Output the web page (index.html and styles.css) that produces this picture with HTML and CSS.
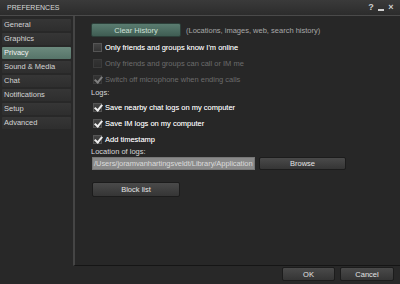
FILE: index.html
```html
<!DOCTYPE html>
<html>
<head>
<meta charset="utf-8">
<link rel="stylesheet" href="styles.css">
</head>
<body>
<div class="window">
  <div class="titlebar">
    <span class="title">PREFERENCES</span>
    <div class="tb-icons">
      <span class="tb-icon">?</span>
      <span class="tb-icon minus"></span>
      <span class="tb-icon">×</span>
    </div>
  </div>
  <div class="main">
    <div class="sidebar">
      <div class="tab">General</div>
      <div class="tab">Graphics</div>
      <div class="tab active">Privacy</div>
      <div class="tab">Sound &amp; Media</div>
      <div class="tab">Chat</div>
      <div class="tab">Notifications</div>
      <div class="tab">Setup</div>
      <div class="tab">Advanced</div>
    </div>
    <div class="panel">
      <div class="row-top">
        <div class="btn teal">Clear History</div>
        <span class="hint">(Locations, images, web, search history)</span>
      </div>
      <div class="check"><span class="box"></span><span class="lbl">Only friends and groups know I'm online</span></div>
      <div class="check disabled"><span class="box"></span><span class="lbl">Only friends and groups can call or IM me</span></div>
      <div class="check disabled"><span class="box checked"></span><span class="lbl">Switch off microphone when ending calls</span></div>
      <div class="section">Logs:</div>
      <div class="check"><span class="box checked"></span><span class="lbl">Save nearby chat logs on my computer</span></div>
      <div class="check"><span class="box checked"></span><span class="lbl">Save IM logs on my computer</span></div>
      <div class="check"><span class="box checked"></span><span class="lbl">Add timestamp</span></div>
      <div class="loc-label">Location of logs:</div>
      <div class="loc-row">
        <div class="field">/Users/joramvanhartingsveldt/Library/Application</div>
        <div class="btn browse">Browse</div>
      </div>
      <div class="btn block">Block list</div>
    </div>
  </div>
  <div class="footer">
    <div class="btn ok">OK</div>
    <div class="btn cancel">Cancel</div>
  </div>
</div>
</body>
</html>
```
FILE: styles.css
```css
* { box-sizing: border-box; }
html, body { margin: 0; padding: 0; }
body {
  width: 400px;
  height: 284px;
  background: #282828;
  font-family: "Liberation Sans", Arial, sans-serif;
  font-size: 7.5px;
  color: #e2e2e2;
  overflow: hidden;
}
.window { width: 400px; height: 284px; display: flex; flex-direction: column; }
.titlebar {
  height: 16px;
  background: linear-gradient(#3a3a3a, #2c2c2c);
  border-bottom: 1px solid #4a4a4a;
  display: flex;
  align-items: center;
  padding: 0 6px 0 7px;
  flex-shrink: 0;
}
.title { color: #d8d8d8; font-size: 7px; flex: 1; }
.tb-icons { display: flex; align-items: center; gap: 4px; }
.tb-icon { color: #cfcfcf; font-size: 9px; font-weight: bold; line-height: 9px; width: 6px; text-align: center; }
.tb-icon.minus { height: 2px; width: 6px; background: #cfcfcf; margin-top: 4px; }
.main { display: flex; height: 250px; flex-shrink: 0; }
.sidebar {
  width: 73px;
  padding: 3px 2px 0 2px;
  display: flex;
  flex-direction: column;
  gap: 2px;
}
.tab {
  height: 12px;
  width: 69px;
  background: linear-gradient(#363636, #2e2e2e);
  border-radius: 1px;
  color: #d4d4d4;
  padding-left: 2px;
  line-height: 12px;
  font-size: 7.5px;
  white-space: nowrap;
}
.tab.active { background: linear-gradient(#6c8a7e, #567469); color: #f0f0f0; }
.panel {
  flex: 1;
  background: #272727;
  border-left: 2px solid #454545;
  border-bottom: 1px solid #151515;
  padding: 7px 0 0 16px;
  display: flex;
  flex-direction: column;
}
.row-top { display: flex; align-items: center; height: 14px; margin-bottom: 2px; }
.btn {
  height: 14px;
  border-radius: 2px;
  background: linear-gradient(#4a4a4a, #353535);
  border: 1px solid #1c1c1c;
  color: #e4e4e4;
  display: flex;
  align-items: center;
  justify-content: center;
  font-size: 7.5px;
}
.btn.teal { width: 90px; background: linear-gradient(#5a7c70, #3f5d53); border-color: #2c3f39; color: #cfe0d8; }
.hint { color: #a8a8a8; margin-left: 5px; white-space: nowrap; font-size: 7.5px; }
.check { height: 16px; display: flex; align-items: center; white-space: nowrap; }
.box {
  width: 9px; height: 9px;
  margin-left: 2px; margin-right: 3px;
  background: linear-gradient(#444, #333);
  border: 1px solid #555;
  position: relative;
  flex-shrink: 0;
}
.box.checked::after {
  content: "";
  position: absolute;
  left: 2px; top: -1px;
  width: 3px; height: 6px;
  border-right: 2px solid #ececec;
  border-bottom: 2px solid #ececec;
  transform: rotate(40deg);
}
.lbl { color: #f0f0f0; font-size: 7.5px; text-shadow: 0 0 0.2px rgba(255,255,255,0.6); }
.check.disabled .lbl { color: #6c6c6c; text-shadow: none; }
.check.disabled .box { opacity: 0.45; }
.section { height: 12px; line-height: 12px; color: #d8d8d8; }
.loc-label { height: 10px; line-height: 10px; color: #d8d8d8; }
.loc-row { display: flex; align-items: center; gap: 4px; margin-left: 1px; height: 13px; }
.field {
  width: 163px; height: 13px;
  background: #8a8a8a;
  color: #dadada;
  line-height: 11px;
  padding-left: 1px;
  white-space: nowrap;
  overflow: hidden;
  border: 1px solid #777;
  letter-spacing: -0.05px;
}
.btn.browse { width: 87px; height: 13px; }
.btn.block { width: 88px; height: 15px; margin-top: 12px; margin-left: 1px; }
.footer {
  flex: 1;
  display: flex;
  justify-content: flex-end;
  align-items: flex-start;
  padding: 1px 6px 0 0;
  gap: 5px;
}
.btn.ok { width: 53px; }
.btn.cancel { width: 54px; }
```
